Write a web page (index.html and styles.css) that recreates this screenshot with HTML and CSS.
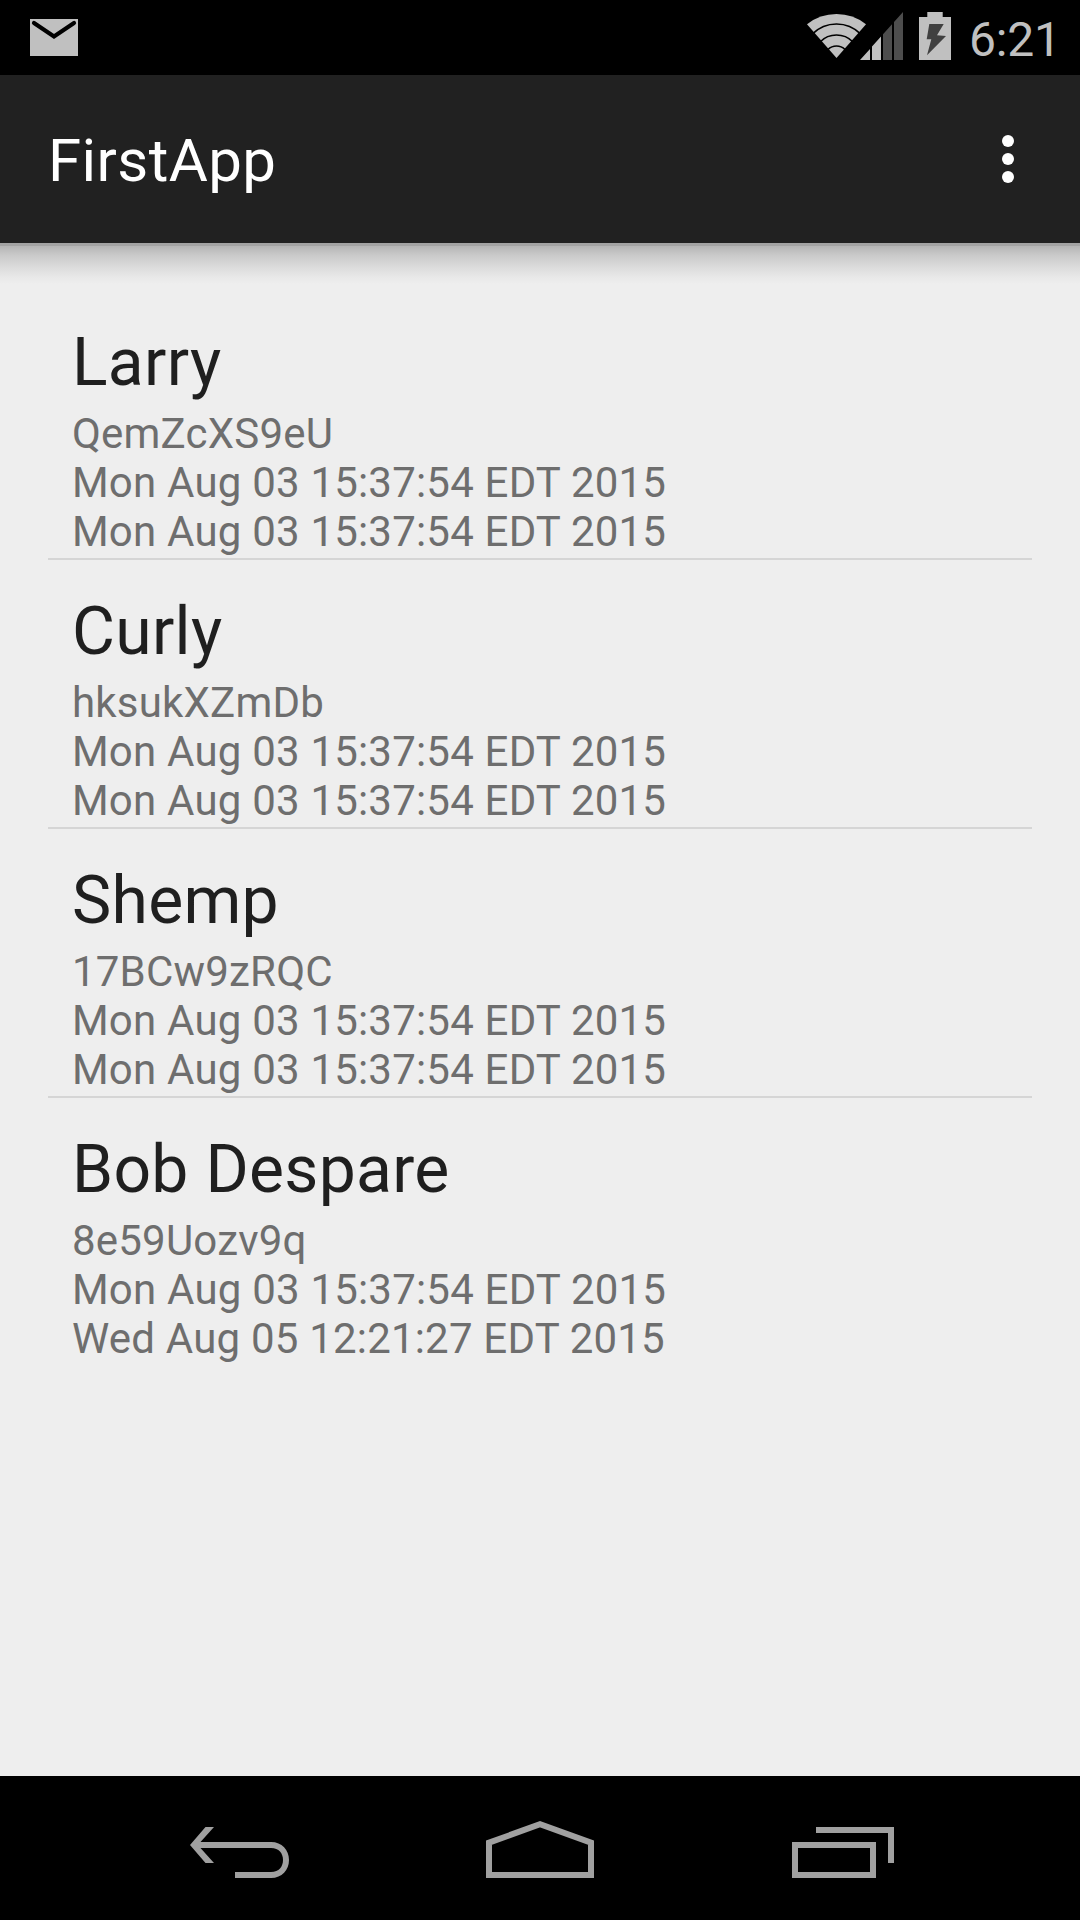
FILE: index.html
```html
<!DOCTYPE html>
<html lang="en">
<head>
  <meta charset="UTF-8" />
  <title>FirstApp</title>
  <link rel="stylesheet" href="styles.css">
</head>
<body>
  <div class="status-bar">
    <svg class="mail" width="48" height="37" viewBox="0 0 48 37">
      <rect width="48" height="37" fill="#c0c0c0" />
      <path d="M4 4L24 17.5L44 4" fill="none" stroke="#000" stroke-width="4.2" stroke-linecap="round" />
    </svg>
    <div class="status-icons">
      <svg class="wifi" width="59" height="44" viewBox="0 0 59 44">
        <path d="M29.5 44L0 10.2Q13 0 29.5 0T59 10.2Z" fill="#c0c0c0" />
        <g fill="none" stroke="#000" stroke-width="1.7">
          <circle cx="29.5" cy="44" r="34" />
          <circle cx="29.5" cy="44" r="23" />
          <circle cx="29.5" cy="44" r="12" />
        </g>
      </svg>
      <svg class="signal" width="43" height="48" viewBox="0 0 43 48">
        <path d="M0 48L10 37V48ZM12 48V34.6L21 24.6V48Z" fill="#c0c0c0" />
        <path d="M23 48V22.3L32 12.3V48ZM34 48V10L43 0V48Z" fill="#4d4d4d" />
      </svg>
      <svg class="battery" width="32" height="48" viewBox="0 0 32 48">
        <path d="M8.3 0H23.7V5H32V48H0V5H8.3Z" fill="#c0c0c0" />
        <path d="M10.3 12H24.7L18 23.3L27 24L8 43.3L12.3 27.3H7.7Z" fill="#404040" />
      </svg>
    </div>
    <span class="clock">6:21</span>
  </div>

  <header class="app-bar">
    <h1>FirstApp</h1>
    <svg class="overflow" width="12" height="48" viewBox="0 0 12 48" fill="#fff">
      <circle cx="6" cy="6" r="6" />
      <circle cx="6" cy="24" r="6" />
      <circle cx="6" cy="42" r="6" />
    </svg>
  </header>

  <main>
    <div class="shadow"></div>
    <ul class="list">
      <li>
        <h2>Larry</h2>
        <p>QemZcXS9eU</p>
        <p>Mon Aug 03 15:37:54 EDT 2015</p>
        <p>Mon Aug 03 15:37:54 EDT 2015</p>
      </li>
      <li>
        <h2>Curly</h2>
        <p>hksukXZmDb</p>
        <p>Mon Aug 03 15:37:54 EDT 2015</p>
        <p>Mon Aug 03 15:37:54 EDT 2015</p>
      </li>
      <li>
        <h2>Shemp</h2>
        <p>17BCw9zRQC</p>
        <p>Mon Aug 03 15:37:54 EDT 2015</p>
        <p>Mon Aug 03 15:37:54 EDT 2015</p>
      </li>
      <li>
        <h2>Bob Despare</h2>
        <p>8e59Uozv9q</p>
        <p>Mon Aug 03 15:37:54 EDT 2015</p>
        <p>Wed Aug 05 12:21:27 EDT 2015</p>
      </li>
    </ul>
  </main>

  <nav class="nav-bar">
    <svg class="back" width="99" height="51" viewBox="0 0 99 51">
      <path d="M0 18L15.5 0H24L10.5 15H81C92 15 99 23 99 33S92 51 81 51H45V45H81C89 45 93 39.5 93 33S89 21 81 21H10.5L24 36H15.5Z" fill="#a0a0a0" />
    </svg>
    <svg class="home" width="108" height="57" viewBox="0 0 108 57">
      <path d="M3 54V21.7L54 3.2L105 21.7V54Z" fill="none" stroke="#a0a0a0" stroke-width="6" />
    </svg>
    <svg class="recent" width="102" height="51" viewBox="0 0 102 51" fill="none" stroke="#a0a0a0" stroke-width="6">
      <rect x="3" y="18" width="78" height="30" />
      <path d="M24 3H99V36" />
    </svg>
  </nav>
</body>
</html>
```
FILE: styles.css
```css
* {
  box-sizing: border-box;
  margin: 0;
  padding: 0;
}
body {
  display: flex;
  flex-direction: column;
  width: 1080px;
  height: 1920px;
  background-color: #eee;
  font-family: Roboto, "Noto Sans", sans-serif;
  overflow: hidden;
}
svg {
  display: block;
  flex: none;
}
.status-bar {
  display: flex;
  align-items: flex-start;
  height: 75px;
  padding: 12px 24px 0 30px;
  background-color: #000;
}
.mail {
  margin-top: 7px;
}
.status-icons {
  display: flex;
  align-items: flex-start;
  margin-left: auto;
}
.wifi {
  margin-top: 2px;
}
.signal {
  margin-left: -6px;
}
.battery {
  margin-left: 16px;
}
.clock {
  width: 87px;
  margin-left: 18px;
  color: #c0c0c0;
  font-size: 48px;
  line-height: 56px;
  letter-spacing: -0.2px;
  white-space: nowrap;
}
.app-bar {
  display: flex;
  align-items: center;
  justify-content: space-between;
  height: 168px;
  padding: 0 66px 0 48px;
  background-color: #212121;
  color: #fff;
}
.app-bar h1 {
  padding-top: 4px;
  font-size: 60px;
  font-weight: 400;
  line-height: 70px;
  letter-spacing: 0.4px;
}
main {
  flex: 1;
}
.shadow {
  height: 48px;
  border-top: 3px solid #a3a3a3;
  background: linear-gradient(#b5b5b5, #c9c9c9 9px, #dadada 20px, #e8e8e8 31px, #eee 38px);
}
.list {
  margin: 0 48px;
  list-style: none;
}
.list li {
  height: 269px;
  padding: 33px 24px 0;
  border-bottom: 2px solid #d5d5d5;
}
.list li:last-child {
  border-bottom: none;
}
.list h2 {
  margin-bottom: 8px;
  color: #1f1f1f;
  font-size: 66px;
  font-weight: 400;
  line-height: 77px;
  letter-spacing: 0.3px;
}
.list p {
  color: #6e6e6e;
  font-size: 42px;
  line-height: 49px;
  letter-spacing: 0.2px;
}
.nav-bar {
  display: flex;
  align-items: flex-end;
  height: 144px;
  padding: 0 186px 42px 190px;
  background-color: #000;
}
.home {
  margin: 0 auto 0 197px;
}
```
